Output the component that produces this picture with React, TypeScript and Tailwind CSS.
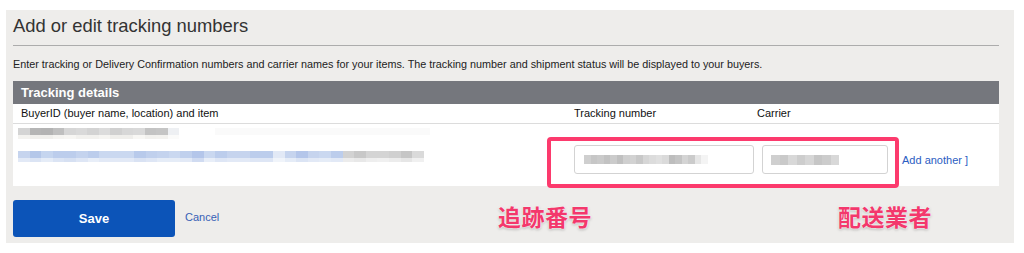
const nameTop = ["bg-[#d4d4d4]", "bg-[#b5b5b5]", "bg-[#b3b3b3]", "bg-[#bfbfbf]", "bg-[#d6d6d6]", "bg-[#d9d9d9]", "bg-[#d3d3d3]", "bg-[#dcdcdc]", "bg-[#d0d0d0]", "bg-[#d7d7d7]", "bg-[#d9d9d9]", "bg-[#c3c3c3]", "bg-[#c5c5c5]", "bg-[#eef0f3]"];
const nameBottom = ["bg-[#f3f2ef]", "bg-[#f0efec]", "bg-[#f0efec]", "bg-[#f5f4f1]", "bg-[#f7f6f3]", "bg-[#f2f1ee]", "bg-[#f2f1ee]", "bg-[#f6f5f2]", "bg-[#efeeeb]", "bg-[#efeeeb]", "bg-[#f8f7f4]", "bg-[#f2f1ee]", "bg-[#f3f2ef]", "bg-[#fbfbfa]"];
const itemTop = ["bg-[#c6d4ee]", "bg-[#b4c7e9]", "bg-[#c5d5ef]", "bg-[#bccdec]", "bg-[#bccdec]", "bg-[#c4d3ee]", "bg-[#bccdec]", "bg-[#cad8f0]", "bg-[#cad8f0]", "bg-[#cad8f0]", "bg-[#b8caeb]", "bg-[#c0d0ed]", "bg-[#c4d3ee]", "bg-[#cad8f0]", "bg-[#c0d0ed]", "bg-[#b4c6ea]", "bg-[#cad8f0]", "bg-[#bccdec]", "bg-[#c6d4ee]", "bg-[#c6d4ee]", "bg-[#bccdec]", "bg-[#bccdec]", "bg-[#e2e9f6]", "bg-[#c6d4ee]", "bg-[#b4c6ea]", "bg-[#c6d4ee]", "bg-[#cad8f0]", "bg-[#bccdec]", "bg-[#d2d2d2]", "bg-[#c8c8c8]", "bg-[#d4d4d4]", "bg-[#d4d4d4]", "bg-[#d0d0d0]", "bg-[#c6c6c6]", "bg-[#dadada]"];
const itemBottom = ["bg-[#e2e9f6]", "bg-[#dbe4f4]", "bg-[#e5ecf7]", "bg-[#dbe4f4]", "bg-[#d6e0f2]", "bg-[#dee6f5]", "bg-[#e8eef8]", "bg-[#e2e9f6]", "bg-[#e2e9f6]", "bg-[#e2e9f6]", "bg-[#d9e2f3]", "bg-[#dee6f5]", "bg-[#e5ecf7]", "bg-[#e5ecf7]", "bg-[#e2e9f6]", "bg-[#d0dbf1]", "bg-[#e8eef8]", "bg-[#dee6f5]", "bg-[#e2e9f6]", "bg-[#e2e9f6]", "bg-[#dee6f5]", "bg-[#dee6f5]", "bg-[#f0f4fa]", "bg-[#e5ecf7]", "bg-[#dbe4f4]", "bg-[#e2e9f6]", "bg-[#e5ecf7]", "bg-[#e2e9f6]", "bg-[#ececec]", "bg-[#e8e8e8]", "bg-[#eeeeee]", "bg-[#f0f0f0]", "bg-[#ececec]", "bg-[#e6e6e6]", "bg-[#f0f0f0]"];
const trackBlocks = ["bg-[#cfcfcf]", "bg-[#c6c6c6]", "bg-[#cacaca]", "bg-[#c2c2c2]", "bg-[#cbcbcb]", "bg-[#c0c0c0]", "bg-[#cfcfcf]", "bg-[#d2d2d2]", "bg-[#c8c8c8]", "bg-[#d6d6d6]", "bg-[#dcdcdc]", "bg-[#e0e0e0]", "bg-[#dadada]", "bg-[#bdbdbd]", "bg-[#c4c4c4]", "bg-[#d4d4d4]", "bg-[#cbcbcb]", "bg-[#e6e6e6]", "bg-[#f4f4f4]"];
const carrierBlocks = ["bg-[#cfcfcf]", "bg-[#c9c9c9]", "bg-[#d8d8d8]", "bg-[#cdcdcd]", "bg-[#d6d6d6]", "bg-[#c6c6c6]", "bg-[#cccccc]", "bg-[#d8d8d8]"];

// pixelated stand-in for the blurred-out buyer and item text
const Mosaic = ({ top, bottom, block, h = "h-[7px]" }: { top: string[]; bottom: string[]; block: string; h?: string }) => (
  <div className="flex flex-col">
    <div className="flex">
      {top.map((c, i) => (
        <div key={i} className={`${block} ${h} ${c}`} />
      ))}
    </div>
    <div className="flex">
      {bottom.map((c, i) => (
        <div key={i} className={`${block} h-[4px] ${c}`} />
      ))}
    </div>
  </div>
);

const labelClass =
  "absolute top-[191px] text-[23px] leading-[30px] tracking-[0.5px] font-bold text-[#f3386c] font-['Noto_Sans_CJK_JP',sans-serif] [text-shadow:0_0_2px_#fff,0_0_2px_#fff,0_1px_3px_rgba(0,0,0,0.35)]";

const App = () => {
  return (
    <div className="w-[1024px] h-[253px] bg-white pt-[10px] pl-[6px] font-['Liberation_Sans',Arial,sans-serif] text-[#222]">
      <div className="relative w-[1008px] h-[233px] bg-[#eeedeb] pl-[7px] pr-[15px]">
        <h1 className="pt-[2px] h-[35px] text-[18.4px] leading-[28px] text-[#333] font-normal">Add or edit tracking numbers</h1>
        <div className="h-px bg-[#acacac]" />
        <p className="mt-[11px] text-[10.8px] leading-[14px] text-[#222]">
          Enter tracking or Delivery Confirmation numbers and carrier names for your items. The tracking number and shipment status will be displayed to your buyers.
        </p>

        <div className="mt-[10px] bg-white">
          <div className="h-[23px] bg-[#75777d] pl-[8px] text-[13px] leading-[24px] font-bold text-white">Tracking details</div>
          <div className="flex h-[20px] items-center border-b border-[#dcdcdc] pl-[8px] text-[11px] text-[#111]">
            <span className="w-[553px]">BuyerID (buyer name, location) and item</span>
            <span className="w-[183px]">Tracking number</span>
            <span>Carrier</span>
          </div>
          <div className="flex h-[62px] items-start">
            <div className="w-[561px] pl-[5px] pt-[4px]">
              <div className="flex items-start">
                <Mosaic top={nameTop} bottom={nameBottom} block="w-[11.5px]" />
                <div className="ml-[36px] h-[7px] w-[215px] bg-[#fafafa]" />
              </div>
              <div className="mt-[12px]">
                <Mosaic top={itemTop} bottom={itemBottom} block="w-[11.6px]" />
              </div>
            </div>
            <div className="mt-[21px] flex h-[29px] w-[180px] items-center rounded-[3px] border border-[#d3d3d3] bg-white pl-[9px]">
              <Mosaic top={trackBlocks} bottom={[]} block="w-[6.5px]" h="h-[9px]" />
            </div>
            <div className="mt-[21px] ml-[8px] flex h-[29px] w-[126px] items-center rounded-[3px] border border-[#d3d3d3] bg-white pl-[8px]">
              <Mosaic top={carrierBlocks} bottom={[]} block="w-[8.5px]" h="h-[10px]" />
            </div>
            <a className="mt-[29px] ml-[14px] text-[11px] leading-[14px] text-[#2b5dc2]">Add another ]</a>
          </div>
        </div>

        <div className="mt-[14px] flex items-center">
          <button className="h-[37px] w-[162px] rounded-[3px] bg-[#0c54b8] text-[13px] font-bold text-white">Save</button>
          <a className="ml-[10px] -mt-[2px] text-[11px] text-[#3761b6]">Cancel</a>
        </div>

        <div className="absolute left-[541px] top-[127px] h-[51px] w-[352px] rounded-[4px] border-[4px] border-[#fc3a6d]" />
        <span className={`${labelClass} left-[492px]`}>追跡番号</span>
        <span className={`${labelClass} left-[832px]`}>配送業者</span>
      </div>
    </div>
  );
};

export default App;
